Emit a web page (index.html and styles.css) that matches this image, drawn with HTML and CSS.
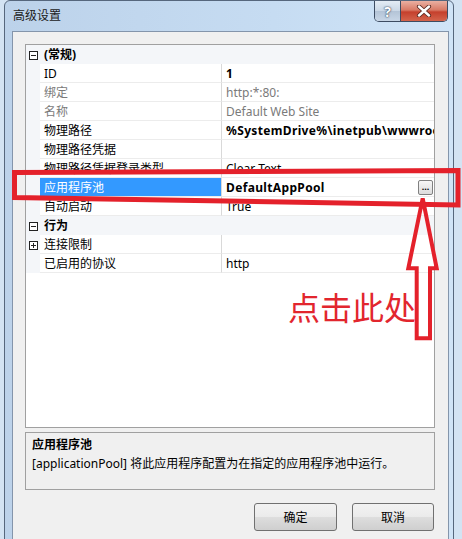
FILE: index.html
```html
<!DOCTYPE html>
<html lang="zh-CN">
<head>
    <meta charset="UTF-8">
    <title>高级设置</title>
    <link rel="stylesheet" href="styles.css">
</head>
<body>

    <div class="window">
        <!-- Title bar -->
        <div class="titlebar">
            <span class="title">高级设置</span>
            <div class="caption-btns">
                <span class="cap help">?</span>
                <span class="cap close">
                    <svg width="16" height="12" viewBox="0 0 16 12">
                        <path d="M3 1.5 L13 10.5 M13 1.5 L3 10.5" stroke="#5a2a22" stroke-width="4.2" stroke-linecap="round"/>
                        <path d="M3 1.5 L13 10.5 M13 1.5 L3 10.5" stroke="#fff" stroke-width="2.4" stroke-linecap="round"/>
                    </svg>
                </span>
            </div>
        </div>

        <div class="client">
            <!-- Property grid -->
            <div class="grid">
                <div class="row cat">
                    <span class="gutter"><svg width="9" height="9"><rect x="0.5" y="0.5" width="8" height="8" fill="#fff" stroke="#222"/><path d="M2 4.5 H7" stroke="#222"/></svg></span>
                    <span class="cat-name">(常规)</span>
                </div>
                <div class="row">
                    <span class="gutter"></span>
                    <span class="name">ID</span>
                    <span class="value bold">1</span>
                </div>
                <div class="row">
                    <span class="gutter"></span>
                    <span class="name grey">绑定</span>
                    <span class="value grey">http:*:80:</span>
                </div>
                <div class="row">
                    <span class="gutter"></span>
                    <span class="name grey">名称</span>
                    <span class="value grey">Default Web Site</span>
                </div>
                <div class="row">
                    <span class="gutter"></span>
                    <span class="name">物理路径</span>
                    <span class="value bold">%SystemDrive%\inetpub\wwwroo</span>
                </div>
                <div class="row">
                    <span class="gutter"></span>
                    <span class="name">物理路径凭据</span>
                    <span class="value"></span>
                </div>
                <div class="row">
                    <span class="gutter"></span>
                    <span class="name">物理路径凭据登录类型</span>
                    <span class="value">Clear Text</span>
                </div>
                <div class="row">
                    <span class="gutter"></span>
                    <span class="name selected">应用程序池</span>
                    <span class="value bold">DefaultAppPool<span class="ellipsis">...</span></span>
                </div>
                <div class="row">
                    <span class="gutter"></span>
                    <span class="name">自动启动</span>
                    <span class="value">True</span>
                </div>
                <div class="row cat">
                    <span class="gutter"><svg width="9" height="9"><rect x="0.5" y="0.5" width="8" height="8" fill="#fff" stroke="#222"/><path d="M2 4.5 H7" stroke="#222"/></svg></span>
                    <span class="cat-name">行为</span>
                </div>
                <div class="row">
                    <span class="gutter"><svg width="9" height="9"><rect x="0.5" y="0.5" width="8" height="8" fill="#fff" stroke="#222"/><path d="M2 4.5 H7 M4.5 2 V7" stroke="#222"/></svg></span>
                    <span class="name">连接限制</span>
                    <span class="value"></span>
                </div>
                <div class="row">
                    <span class="gutter"></span>
                    <span class="name">已启用的协议</span>
                    <span class="value">http</span>
                </div>
            </div>

            <!-- Description panel -->
            <div class="desc">
                <div class="desc-title">应用程序池</div>
                <div>[applicationPool] 将此应用程序配置为在指定的应用程序池中运行。</div>
            </div>

            <div class="actions">
                <button class="btn">确定</button>
                <button class="btn cancel">取消</button>
            </div>
        </div>
    </div>

    <!-- Red annotation drawn over the screenshot -->
    <div class="annot-text">点击此处</div>
    <svg class="annot" width="462" height="539">
        <polygon points="14.5,172.5 458,170.5 458,205 14.5,197.5" fill="none" stroke="#e4212b" stroke-width="5"/>
        <polygon points="422.7,198.3 436.7,268.3 430,268.3 430,338.3 416.7,338.3 416.7,268.3 408.3,268.3" fill="none" stroke="#e4212b" stroke-width="4"/>
    </svg>

</body>
</html>
```

FILE: styles.css
```css
* {
    box-sizing: border-box;
}
body {
    margin: 0;
    width: 462px;
    height: 539px;
    overflow: hidden;
    position: relative;
    background: #d3e3f3;
    font-family: "Noto Sans", "Noto Sans CJK SC", sans-serif;
    font-size: 12px;
    color: #000;
}
.window {
    margin-left: 4px;
    width: 450px;
    height: 560px;
    border: 1px solid #56677d;
    border-radius: 6px 6px 0 0;
    background: linear-gradient(to right, #bcd2ea, #c6dcf2 60%, #d0e4f7);
    display: flex;
    flex-direction: column;
}
.titlebar {
    height: 30px;
    display: flex;
    justify-content: space-between;
    align-items: flex-start;
    padding: 0 5px 0 8px;
}
.title {
    line-height: 29px;
    color: #1a1a1a;
}
.caption-btns {
    display: flex;
    height: 21px;
    border: 1px solid #3d4c62;
    border-top: none;
    border-radius: 0 0 5px 5px;
    overflow: hidden;
}
.cap {
    display: flex;
    align-items: center;
    justify-content: center;
}
.help {
    width: 26px;
    border-right: 1px solid #3d4c62;
    background: linear-gradient(#e4ecf5, #cbd8e6 48%, #b4c4d7 52%, #c8d6e6);
    color: #fff;
    font-weight: bold;
    font-size: 14px;
    text-shadow: 0 0 2px #2f4058, 0 0 1px #2f4058;
}
.close {
    width: 46px;
    background: linear-gradient(#eab0a2, #d87a66 45%, #c5402d 55%, #d3644c);
}

/* dialog body */
.client {
    flex: 1;
    margin: 0 4px 0 7px;
    border: 1px solid #8495ab;
    border-bottom: none;
    background: #f0f0f0;
    padding: 12px 13px 0 12px;
}
.grid {
    height: 384px;
    border: 1px solid #a0a0a0;
    background: #fff;
}
.row {
    display: flex;
    height: 19px;
}
.gutter {
    width: 14px;
    flex: none;
    background: #f4f6f9;
    display: flex;
    align-items: center;
    justify-content: center;
    padding-top: 1px;
}
.name {
    width: 182px;
    flex: none;
    padding: 1px 0 0 4px;
    line-height: 17px;
    border-right: 1px solid #d9d9d9;
    border-bottom: 1px solid #ececec;
    white-space: nowrap;
    overflow: hidden;
}
.value {
    flex: 1;
    display: flex;
    padding: 1px 0 0 4px;
    line-height: 17px;
    border-bottom: 1px solid #ececec;
    white-space: nowrap;
    overflow: hidden;
}
.cat {
    background: #f4f6f9;
}
.cat-name {
    padding: 1px 0 0 4px;
    line-height: 18px;
    font-weight: bold;
}
.bold {
    font-weight: bold;
    letter-spacing: 0.35px;
}
.grey {
    color: #7a7a7a;
}
.selected {
    background: #3399ff;
    color: #fff;
}
.ellipsis {
    margin: 1px 1px 0 auto;
    width: 15px;
    height: 15px;
    border: 1px solid #808080;
    border-radius: 2px;
    background: linear-gradient(#f7f7f7, #dcdcdc);
    font-size: 9px;
    line-height: 12px;
    letter-spacing: 0;
    text-align: center;
}

.desc {
    margin-top: 4px;
    height: 58px;
    border: 1px solid #a0a0a0;
    padding: 2px 6px 0;
    line-height: 19px;
}
.desc-title {
    font-weight: bold;
}

.actions {
    display: flex;
    justify-content: flex-end;
    gap: 15px;
    width: 410px;
    margin-top: 13px;
    padding-right: 1px;
}
.btn {
    width: 83px;
    height: 28px;
    border: 1px solid #707070;
    border-radius: 3px;
    background: linear-gradient(#f2f2f2, #ebebeb 48%, #dddddd 52%, #cfcfcf);
    font: inherit;
    color: #000;
}
.btn.cancel {
    width: 82px;
}

/* annotation */
.annot-text {
    position: absolute;
    left: 288px;
    top: 290px;
    font-family: "Noto Sans CJK SC", sans-serif;
    font-size: 32px;
    line-height: 32px;
    color: #e2262e;
}
.annot {
    position: absolute;
    left: 0;
    top: 0;
}
```
